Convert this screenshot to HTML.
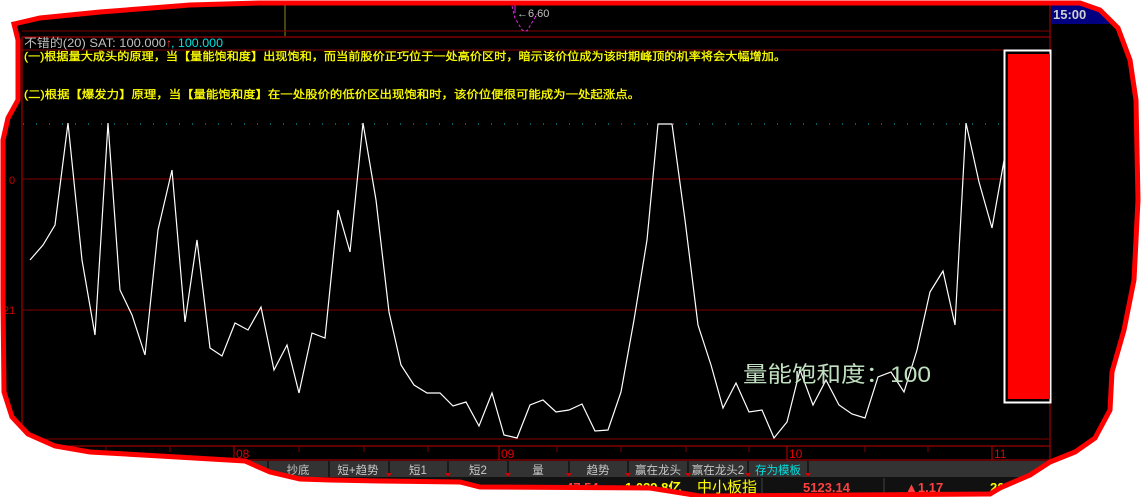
<!DOCTYPE html>
<html><head><meta charset="utf-8"><style>
html,body{margin:0;padding:0;background:#fff;width:1141px;height:497px;overflow:hidden}
svg{display:block}
text{font-family:"Liberation Sans","Noto Sans CJK SC",sans-serif}
</style></head><body>
<svg width="1141" height="497" viewBox="0 0 1141 497" xmlns="http://www.w3.org/2000/svg">
<defs><clipPath id="blob"><path id="bp" d="M14,24 L40,18 L100,12 L190,5 L260,3 L1080,3 L1100,10 L1118,28 L1130,60 L1136,100 L1138,200 L1134,280 L1124,330 L1112,372 L1110,410 L1095,438 L1075,452 L1050,462 L1030,475 L1000,488 L990,494 L700,496 L650,488 L480,487 L460,482 L380,481 L330,480 L300,479 L270,472 L245,461 L160,456 L90,452 L55,446 L28,434 L12,417 L4,392 L3,300 L3,140 L8,118 L18,100 L18,40 Z"/></clipPath></defs>
<rect width="1141" height="497" fill="#fff"/>
<g clip-path="url(#blob)">
<rect width="1141" height="497" fill="#000"/>
<line x1="285" y1="0" x2="285" y2="36" stroke="#8a8a20"/>
<line x1="22" y1="31" x2="1050" y2="31" stroke="#800000"/>
<line x1="22" y1="37" x2="1050" y2="37" stroke="#c00000"/>
<line x1="22" y1="50" x2="1003" y2="50" stroke="#800000"/>
<path d="M512,6 L515,18 L522,30 L527,31 L537,14" fill="none" stroke="#e020e0" stroke-dasharray="3,2"/>
<line x1="515" y1="0" x2="515" y2="13" stroke="#e020e0"/>
<text x="517" y="17" font-size="11" fill="#c0c0c0">←6.60</text>
<line x1="22" y1="37" x2="22" y2="446" stroke="#c00000"/>
<line x1="1050" y1="0" x2="1050" y2="497" stroke="#c00000"/>
<rect x="1051" y="4" width="90" height="20" fill="#000080"/>
<text x="1053" y="19" font-size="13" font-weight="bold" fill="#d0d0d0">15:00</text>
<text x="24" y="47" font-size="12" fill="#c0c0c0" textLength="142" lengthAdjust="spacingAndGlyphs">不错的(20) SAT: 100.000</text>
<text x="166" y="47" font-size="12" fill="#ff4040">↑</text>
<text x="171" y="47" font-size="12" fill="#00e0e0" textLength="52" lengthAdjust="spacingAndGlyphs">, 100.000</text>
<text x="24" y="60" font-size="11" fill="#ffff00" stroke="#ffff00" stroke-width="0.3" textLength="762" lengthAdjust="spacingAndGlyphs">(一)根据量大成头的原理，当【量能饱和度】出现饱和，而当前股价正巧位于一处高价区时，暗示该价位成为该时期峰顶的机率将会大幅增加。</text>
<text x="24" y="98" font-size="11" fill="#ffff00" stroke="#ffff00" stroke-width="0.3" textLength="616" lengthAdjust="spacingAndGlyphs">(二)根据【爆发力】原理，当【量能饱和度】在一处股价的低价区出现饱和时，该价位便很可能成为一处起涨点。</text>
<line x1="23" y1="124" x2="1000" y2="124" stroke="#00c0c0" stroke-dasharray="1,12"/>
<line x1="23" y1="179" x2="1003" y2="179" stroke="#800000"/>
<line x1="23" y1="310" x2="1003" y2="310" stroke="#800000"/>
<text x="9" y="184" font-size="11" fill="#c00000">0</text>
<text x="3" y="314" font-size="11" fill="#c00000">21</text>
<line x1="23" y1="439" x2="1050" y2="439" stroke="#800000"/>
<line x1="23" y1="446" x2="1050" y2="446" stroke="#c00000"/>
<g stroke="#800000"><line x1="106" y1="446" x2="106" y2="452"/><line x1="170" y1="446" x2="170" y2="452"/><line x1="299" y1="446" x2="299" y2="452"/><line x1="364" y1="446" x2="364" y2="452"/><line x1="428" y1="446" x2="428" y2="452"/><line x1="557" y1="446" x2="557" y2="452"/><line x1="621" y1="446" x2="621" y2="452"/><line x1="686" y1="446" x2="686" y2="452"/><line x1="749" y1="446" x2="749" y2="452"/><line x1="865" y1="446" x2="865" y2="452"/><line x1="928" y1="446" x2="928" y2="452"/></g>
<g stroke="#c00000"><line x1="234" y1="446" x2="234" y2="460"/><line x1="499" y1="446" x2="499" y2="460"/><line x1="787" y1="446" x2="787" y2="460"/><line x1="992" y1="446" x2="992" y2="460"/></g>
<g font-size="12" fill="#e00000"><text x="236" y="458">08</text><text x="501" y="458">09</text><text x="789" y="458">10</text><text x="994" y="458">11</text></g>
<line x1="23" y1="460" x2="1050" y2="460" stroke="#c00000"/>
<rect x="23" y="461" width="1027" height="16" fill="#333"/>
<g stroke="#000"><line x1="268" y1="461" x2="268" y2="477"/><line x1="329" y1="461" x2="329" y2="477"/><line x1="389" y1="461" x2="389" y2="477"/><line x1="448" y1="461" x2="448" y2="477"/><line x1="508" y1="461" x2="508" y2="477"/><line x1="569" y1="461" x2="569" y2="477"/><line x1="628" y1="461" x2="628" y2="477"/><line x1="688" y1="461" x2="688" y2="477"/><line x1="748" y1="461" x2="748" y2="477"/><line x1="808" y1="461" x2="808" y2="477"/></g>
<g font-size="11.5" fill="#c8c8c8" text-anchor="middle"><text x="298" y="474">抄底</text><text x="358" y="474">短+趋势</text><text x="418" y="474">短1</text><text x="478" y="474">短2</text><text x="538" y="474">量</text><text x="598" y="474">趋势</text><text x="658" y="474">赢在龙头</text><text x="718" y="474">赢在龙头2</text><text x="778" y="474" fill="#00e0e0">存为模板</text></g>
<g fill="#d00000"><path d="M389,477 l-3,-4 l6,0z"/><path d="M448,477 l-3,-4 l6,0z"/><path d="M508,477 l-3,-4 l6,0z"/><path d="M569,477 l-3,-4 l6,0z"/><path d="M628,477 l-3,-4 l6,0z"/><path d="M688,477 l-3,-4 l6,0z"/><path d="M748,477 l-3,-4 l6,0z"/><path d="M808,477 l-3,-4 l6,0z"/></g>
<rect x="23" y="477" width="1027" height="20" fill="#111"/>
<text x="566" y="492" font-size="13" font-weight="bold" fill="#ff4040">47.54</text>
<text x="625" y="492" font-size="13" font-weight="bold" fill="#ffff00">1,039.8亿</text>
<text x="697" y="492" font-size="15" fill="#ffff00">中小板指</text>
<line x1="762" y1="478" x2="762" y2="497" stroke="#444"/>
<text x="803" y="492" font-size="13" font-weight="bold" fill="#ff4040">5123.14</text>
<line x1="884" y1="478" x2="884" y2="497" stroke="#444"/>
<text x="905" y="492" font-size="13" font-weight="bold" fill="#ff4040">▲1.17</text>
<text x="990" y="492" font-size="13" font-weight="bold" fill="#ffff00">20</text>
<rect x="1004.5" y="50.5" width="46" height="352" fill="none" stroke="#fff" stroke-width="2"/>
<rect x="1008" y="54" width="42" height="345" fill="#ff0000"/>
<polyline fill="none" stroke="#fff" stroke-width="1.2" points="30,260 43,245 55,225 68,123 82,260 95,335 108,123 120,290 132,315 145,355 158,230 172,170 185,322 197,240 210,348 222,356 235,323 248,330 261,307 274,370 287,345 299,393 312,333 325,338 338,210 350,252 363,123 376,200 389,312 401,365 414,385 427,393 440,393 453,406 466,402 479,426 492,393 504,435 517,438 530,405 543,400 556,412 569,410 582,404 595,431 608,430 621,392 634,320 647,240 658,124 672,124 685,220 698,325 711,365 723,408 736,383 749,412 762,410 774,438 787,422 800,370 813,405 826,380 839,405 852,414 865,418 878,377 891,372 904,392 917,350 930,292 943,271 955,325 966,123 979,182 992,228 1005,155"/>
<text x="743" y="382" font-size="22" fill="#c0e0c0" font-family="Liberation Serif,Noto Serif CJK SC,serif" textLength="188" lengthAdjust="spacingAndGlyphs">量能饱和度：100</text>
</g>
<use href="#bp" fill="none" stroke="#ff0000" stroke-width="5"/>
</svg>
</body></html>
